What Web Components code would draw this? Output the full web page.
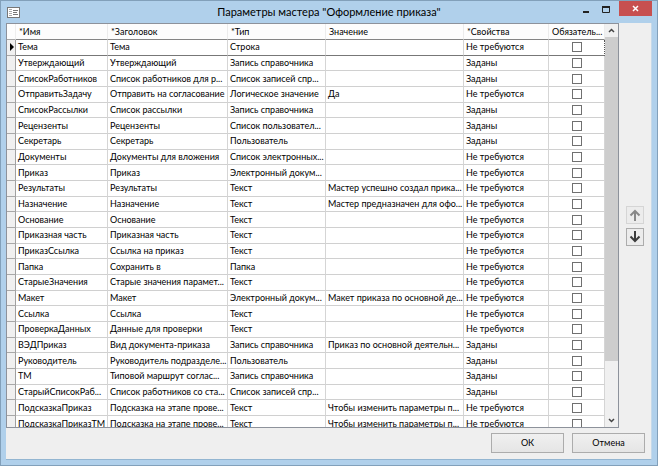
<!DOCTYPE html>
<html lang="ru">
<head>
<meta charset="utf-8">
<title>Параметры мастера "Оформление приказа"</title>
<style>
  html, body { height: 100%; margin: 0; }
  body { font: 9px/14px Lato, "Open Sans", sans-serif; color: #000; }
</style>
</head>
<body>
<dialog-window>
  <span slot="title">Параметры мастера "Оформление приказа"</span>
  <param-grid></param-grid>
  <order-buttons slot="side"></order-buttons>
  <dialog-button slot="footer">ОК</dialog-button>
  <dialog-button slot="footer">Отмена</dialog-button>
</dialog-window>

<template id="window-template">
  <style>
    :host { display: flex; flex-direction: column; height: 100vh; box-sizing: border-box; background: #b0d0eb; border: 1px solid #82a0ba; padding: 0 5px 5px; }
    header { display: grid; grid-template-columns: 96px 1fr 96px; height: 22px; flex: none; }
    .icon { width: 13px; height: 11px; margin: 6px 0 0 1px; }
    h1 { margin: 0; text-align: center; font-size: 11px; line-height: 22px; font-weight: 400; white-space: nowrap; color: #000; }
    .caption { display: flex; justify-content: flex-end; align-items: flex-start; }
    .caption button { border: 0; padding: 0; background: none; width: 20px; height: 15px; display: grid; place-items: center; }
    .caption .close { width: 33px; margin-left: 3px; background: #c75050; }
    main { flex: 1; min-height: 0; display: flex; flex-direction: column; background: #efefef; border-right: 1px solid #c6d9e9; border-bottom: 1px solid #93b5d1; }
    .body { flex: 1; min-height: 0; display: flex; }
    .grid { flex: 1; min-width: 0; display: flex; }
    aside { width: 32px; flex: none; display: flex; justify-content: center; align-items: center; }
    footer { display: flex; justify-content: flex-end; gap: 8px; padding: 5px 6px 6px; flex: none; }
  </style>
  <header>
    <svg class="icon" viewBox="0 0 13 11"><rect x=".5" y=".5" width="12" height="10" fill="#fff" stroke="#777"/><path d="M2 2.5h3M2 4.5h3M2 6.5h3M2 8.5h3" stroke="#aaa"/><path d="M6 3.5h5M6 5.5h4M6 7.5h5" stroke="#777"/></svg>
    <h1><slot name="title"></slot></h1>
    <div class="caption">
      <button aria-label="Свернуть"><svg width="8" height="14"><path d="M1 10h6" stroke="#222" stroke-width="2"/></svg></button>
      <button aria-label="Развернуть"><svg width="8" height="14"><path d="M.5 5v5.5h7V5" fill="none" stroke="#222"/><path d="M0 5h8" stroke="#222" stroke-width="2"/></svg></button>
      <button class="close" aria-label="Закрыть"><svg width="7" height="7"><path d="M1 1l5 5M6 1L1 6" stroke="#fff" stroke-width="1.5"/></svg></button>
    </div>
  </header>
  <main>
    <div class="body">
      <div class="grid"><slot></slot></div>
      <aside><slot name="side"></slot></aside>
    </div>
    <footer><slot name="footer"></slot></footer>
  </main>
</template>

<template id="grid-template">
  <style>
    :host { display: flex; flex: 1; min-width: 0; box-sizing: border-box; background: #fff; border: 1px solid #8d929b; }
    .view { flex: 1; min-width: 0; min-height: 0; overflow: hidden; }
    table { width: 100%; height: calc(100% + 5px); table-layout: fixed; border-collapse: separate; border-spacing: 0; }
    th, td { box-sizing: border-box; padding: 0 0 0 2px; text-align: left; font-weight: 400; white-space: nowrap; overflow: hidden; border-right: 1px solid #d5d5d5; border-bottom: 1px solid #d0d0d0; height: 15px; }
    thead th { height: 16px; padding-left: 3px; border-right-color: #ececec; border-bottom-color: #858585; background: #fdfdfd; }
    .mark { padding: 0; background: #f0f0f0; border-right-color: #a0a0a0; border-bottom-color: #a8a8a8; }
    thead .mark { background: #fdfdfd; border-right-color: #eee; }
    .current td:not(.mark) { border-bottom-color: #777; }
    .current td:last-child { border-right: 1px dotted #555; }
    .check { padding: 0; text-align: center; }
    svg { display: block; }
    input { appearance: none; display: block; box-sizing: border-box; width: 10px; height: 10px; margin: 0 auto; border: 1px solid #707070; background: #fff; }
    .scroll { width: 13px; flex: none; background: #f0f0f0; display: flex; flex-direction: column; }
    .scroll button { flex: none; height: 13px; border: 0; padding: 0; background: none; display: grid; place-items: center; }
    .track { flex: 1; }
    .thumb { height: 86%; background: #cdcdcd; }
  </style>
  <div class="view">
    <table>
      <colgroup><col style="width:9px"><col style="width:92px"><col style="width:120px"><col style="width:98px"><col><col style="width:85px"><col style="width:56px"></colgroup>
      <thead><tr><th class="mark"></th><th>*Имя</th><th>*Заголовок</th><th>*Тип</th><th>Значение</th><th>*Свойства</th><th>Обязатель...</th></tr></thead>
      <tbody></tbody>
    </table>
  </div>
  <div class="scroll">
    <button aria-label="Прокрутить вверх"><svg width="7" height="5"><path d="M1 4l2.500-2.500L6 4" fill="none" stroke="#444" stroke-width="1.500"/></svg></button>
    <div class="track"><div class="thumb"></div></div>
    <button aria-label="Прокрутить вниз"><svg width="7" height="5"><path d="M1 1l2.500 2.500L6 1" fill="none" stroke="#444" stroke-width="1.500"/></svg></button>
  </div>
</template>

<template id="order-template">
  <style>
    :host { display: flex; flex-direction: column; gap: 4px; }
    button { box-sizing: border-box; width: 18px; height: 18px; padding: 0; display: grid; place-items: center; background: #ececec; border: 1px solid #acacac; color: #3c3c3c; }
    button:disabled { border-color: #d5d5d5; color: #888; }
  </style>
  <button disabled aria-label="Вверх"><svg width="12" height="12"><path d="M6 12V2M1.500 6.500L6 2l4.500 4.500" fill="none" stroke="currentColor" stroke-width="2"/></svg></button>
  <button aria-label="Вниз"><svg width="12" height="12"><path d="M6 0v10M1.500 5.500L6 10l4.500-4.500" fill="none" stroke="currentColor" stroke-width="2"/></svg></button>
</template>

<template id="button-template">
  <style>
    :host { display: block; width: 73px; }
    button { box-sizing: border-box; width: 100%; height: 20px; padding: 0; font: inherit; color: inherit; border: 1px solid #acacac; background: linear-gradient(#f0f0f0, #e5e5e5); }
  </style>
  <button><slot></slot></button>
</template>

<script>
  const rows = [
    ["Тема", "Тема", "Строка", "", 0],
    ["Утверждающий", "Утверждающий", "Запись справочника", "", 1],
    ["СписокРаботников", "Список работников для р...", "Список записей спр...", "", 1],
    ["ОтправитьЗадачу", "Отправить на согласование", "Логическое значение", "Да", 0],
    ["СписокРассылки", "Список рассылки", "Запись справочника", "", 1],
    ["Рецензенты", "Рецензенты", "Список пользовател...", "", 1],
    ["Секретарь", "Секретарь", "Пользователь", "", 1],
    ["Документы", "Документы для вложения", "Список электронных...", "", 0],
    ["Приказ", "Приказ", "Электронный докум...", "", 0],
    ["Результаты", "Результаты", "Текст", "Мастер успешно создал прика...", 0],
    ["Назначение", "Назначение", "Текст", "Мастер предназначен для офо...", 0],
    ["Основание", "Основание", "Текст", "", 0],
    ["Приказная часть", "Приказная часть", "Текст", "", 0],
    ["ПриказСсылка", "Ссылка на приказ", "Текст", "", 0],
    ["Папка", "Сохранить в", "Папка", "", 0],
    ["СтарыеЗначения", "Старые значения парамет...", "Текст", "", 0],
    ["Макет", "Макет", "Электронный докум...", "Макет приказа по основной де...", 0],
    ["Ссылка", "Ссылка", "Текст", "", 0],
    ["ПроверкаДанных", "Данные для проверки", "Текст", "", 0],
    ["ВЭДПриказ", "Вид документа-приказа", "Запись справочника", "Приказ по основной деятельн...", 1],
    ["Руководитель", "Руководитель подразделе...", "Пользователь", "", 1],
    ["ТМ", "Типовой маршрут соглас...", "Запись справочника", "", 1],
    ["СтарыйСписокРаб...", "Список работников со ста...", "Список записей спр...", "", 1],
    ["ПодсказкаПриказ", "Подсказка на этапе прове...", "Текст", "Чтобы изменить параметры п...", 0],
    ["ПодсказкаПриказТМ", "Подсказка на этапе прове...", "Текст", "Чтобы изменить параметры п...", 0]
  ];

  class TemplateElement extends HTMLElement {
    constructor() {
      super();
      const template = document.getElementById(this.constructor.template);
      this.attachShadow({ mode: "open" }).append(template.content.cloneNode(true));
    }
  }

  class DialogWindow extends TemplateElement { static template = "window-template"; }
  class OrderButtons extends TemplateElement { static template = "order-template"; }
  class DialogButton extends TemplateElement { static template = "button-template"; }

  class ParamGrid extends TemplateElement {
    static template = "grid-template";
    constructor() {
      super();
      const marker = '<svg width="8" height="8"><path d="M3 0l4 4-4 4z" fill="#000"/></svg>';
      this.shadowRoot.querySelector("tbody").innerHTML = rows.map(([name, title, type, value, set], i) => `
        <tr class="${i ? "" : "current"}"><td class="mark">${i ? "" : marker}</td>
        <td>${name}</td><td>${title}</td><td>${type}</td><td>${value}</td><td>${set ? "Заданы" : "Не требуются"}</td>
        <td class="check"><input type="checkbox" aria-label="Обязательный: ${name}"></td></tr>`).join("");
    }
  }

  customElements.define("dialog-window", DialogWindow);
  customElements.define("order-buttons", OrderButtons);
  customElements.define("dialog-button", DialogButton);
  customElements.define("param-grid", ParamGrid);
</script>
</body>
</html>
